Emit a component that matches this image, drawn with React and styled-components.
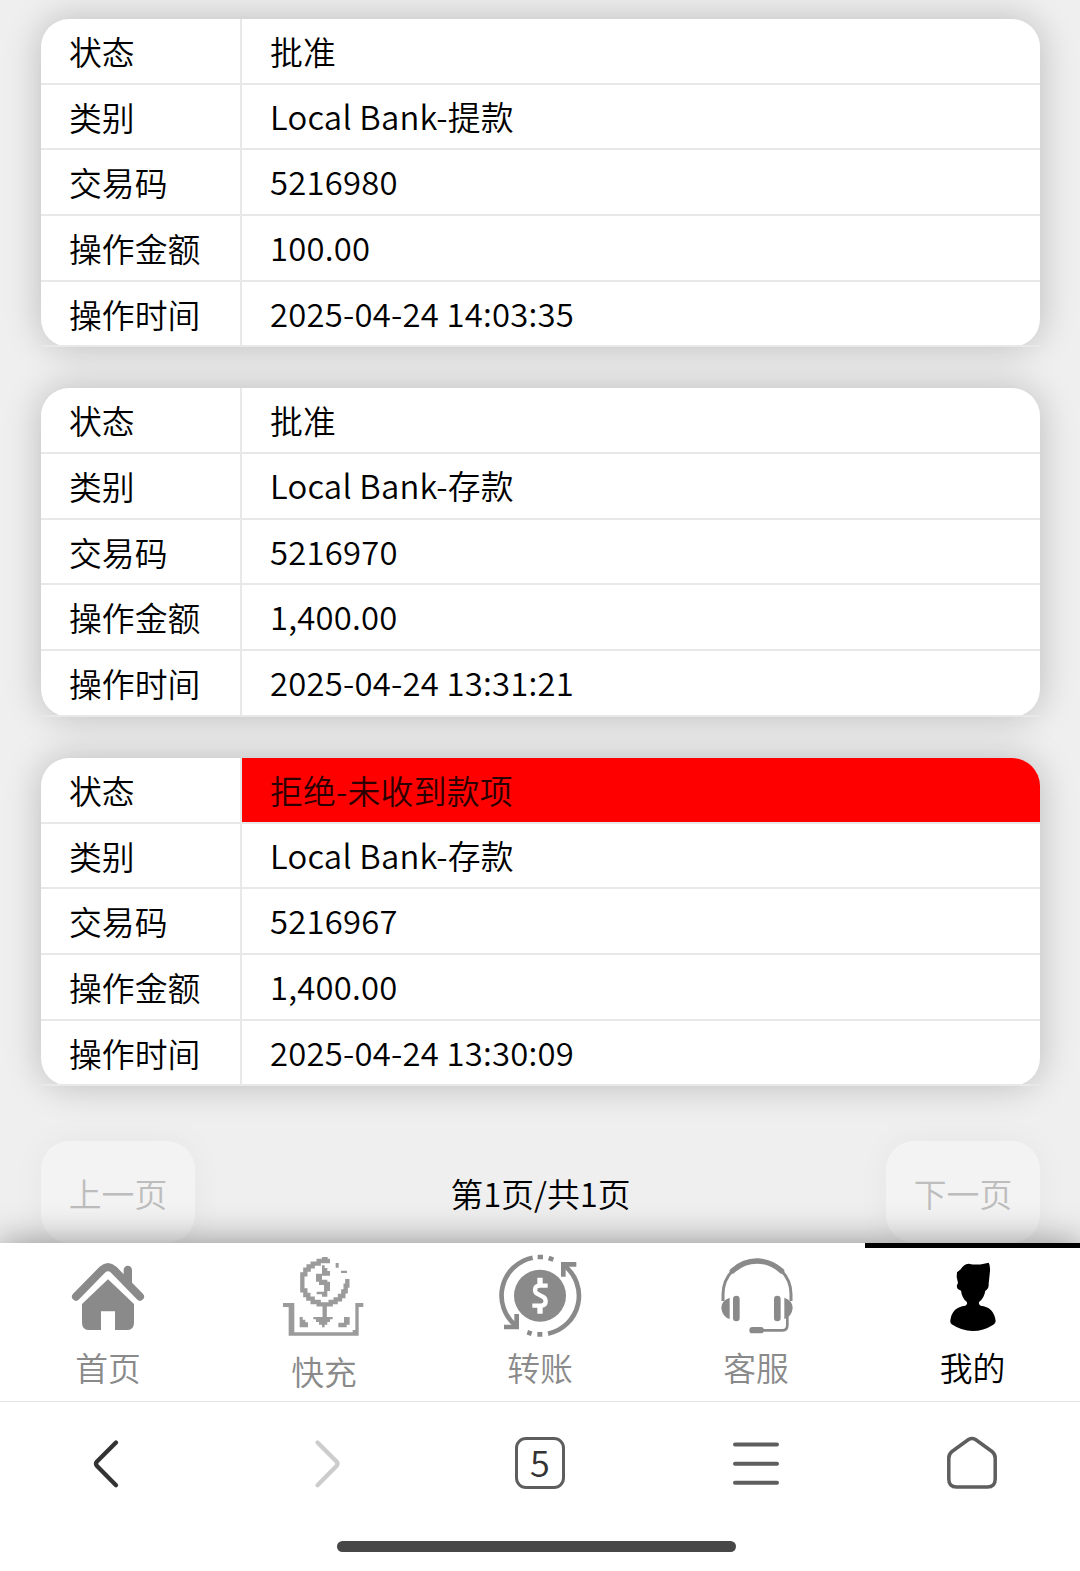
import React from 'react'
import styled, { createGlobalStyle } from 'styled-components'

const GlobalStyle = createGlobalStyle`
  * {
    box-sizing: border-box;
  }
  body {
    margin: 0;
    background: #efefef;
    font-family: "Noto Sans CJK SC", sans-serif;
    font-size: 32.85px;
    font-weight: 350;
    color: #000;
  }
`

const Screen = styled.div`
  display: flex;
  flex-direction: column;
  height: 1571px;
  overflow: hidden;
`

const Content = styled.main`
  flex: 1;
  min-height: 0;
  padding: 19px 40px 0 41px;
`

const Card = styled.section`
  margin-bottom: 41.28px;
  background: #fff;
  border-radius: 28px;
  box-shadow: 0 0 36px rgba(0, 0, 0, 0.22);
`

const Row = styled.div`
  display: flex;
  height: 65.65px;
  border-bottom: 2px solid #e8e8e8;
  line-height: 64px;
  white-space: nowrap;
`

const Label = styled.div`
  width: 201px;
  padding-left: 28px;
  border-right: 2px solid #e8e8e8;
`

const Value = styled.div`
  flex: 1;
  padding-left: 28px;
  letter-spacing: 0.22px;
  line-height: 62.4px;
`

const Status = styled(Value)`
  background: ${(props) => (props.$rejected ? '#ff0000' : 'transparent')};
  color: ${(props) => (props.$rejected ? '#2c0000' : '#000')};
  border-top-right-radius: 28px;
  line-height: 64px;
`

const Pager = styled.div`
  display: flex;
  justify-content: space-between;
  padding-top: 13.5px;
  line-height: 104px;
`

const PageButton = styled.button`
  width: 154px;
  height: 102px;
  padding: 0 0 2px;
  border: 0;
  border-radius: 28px;
  background: #f3f3f3;
  box-shadow: 0 0 34px rgba(0, 0, 0, 0.045);
  color: #bdbdbd;
  font: inherit;
  line-height: 104px;
`

const TabBar = styled.nav`
  display: grid;
  grid-template-columns: repeat(5, 1fr);
  height: 158px;
  background: #fff;
  box-shadow: 0 0 34px rgba(0, 0, 0, 0.42);
  position: relative;
`

const Tab = styled.a`
  display: flex;
  flex-direction: column;
  align-items: center;
  margin-left: ${(props) => (props.$active ? '1px' : '0')};
  border-top: 5px solid ${(props) => (props.$active ? '#000' : 'transparent')};
  color: ${(props) => (props.$active ? '#000' : '#8a8a8a')};
`

const TabIcon = styled.svg`
  width: 82px;
  height: 82px;
  margin-top: ${(props) => props.$top || 6}px;
`

const TabText = styled.span`
  margin-top: ${(props) => props.$top || 7}px;
  line-height: 48px;
`

const BrowserBar = styled.footer`
  display: flex;
  flex-direction: column;
  align-items: center;
  height: 170px;
  background: #fff;
  border-top: 1px solid #e3e3e3;
  position: relative;
`

const Tools = styled.div`
  display: grid;
  grid-template-columns: repeat(5, 1fr);
  place-items: center;
  width: 100%;
  height: 123px;
`

const ToolIcon = styled.svg`
  width: 60px;
  height: 60px;
  fill: none;
  stroke: ${(props) => props.$color || '#5e5e5e'};
  stroke-width: ${(props) => props.$stroke || 4};
  stroke-linecap: round;
  stroke-linejoin: round;
`

const TabCount = styled.div`
  width: 50px;
  height: 52px;
  margin-bottom: 2px;
  border: 3.5px solid #5e5e5e;
  border-radius: 11px;
  color: #333;
  font-size: 36px;
  line-height: 43px;
  text-align: center;
`

const HomeIndicator = styled.div`
  width: 399px;
  height: 11px;
  margin-top: 16px;
  margin-left: -7px;
  border-radius: 6px;
  background: #474747;
`

const records = [
  { status: '批准', type: 'Local Bank-提款', code: '5216980', amount: '100.00', time: '2025-04-24 14:03:35' },
  { status: '批准', type: 'Local Bank-存款', code: '5216970', amount: '1,400.00', time: '2025-04-24 13:31:21' },
  { status: '拒绝-未收到款项', rejected: true, type: 'Local Bank-存款', code: '5216967', amount: '1,400.00', time: '2025-04-24 13:30:09' },
]

function HomeIcon() {
  return (
    <TabIcon viewBox="201 402 246 246">
      <path d="M371 478V450a12.500 12.500 0 0 1 25 0V502z" fill="currentColor" />
      <path d="M228 530L307 449Q324 434 341 449L420 530" fill="none" stroke="currentColor" strokeWidth="24" strokeLinecap="round" />
      <path d="M324 478L402 552V608Q402 630 380 630H345V574H303V630H268Q246 630 246 608V552Z" fill="currentColor" />
    </TabIcon>
  )
}

function DepositIcon() {
  return (
    <TabIcon viewBox="69 60 246 246" $top={7} color="#9b9b9b">
      <g fill="none" stroke="currentColor" strokeWidth="13">
        <path d="M210 78H176V86H158V94H146V104H136V118H127V166H136V180H145V191H158V201H176V208H212V201H227V193H240V183H250V169H257V152H262V132" />
        <path d="M194 208V250" />
      </g>
      <path d="M186 66h17v8h-17zM227 84h9v14h-9zM243 107h18v7h-18z" fill="currentColor" />
      <path d="M186 91H194V99H202V108H210V122H186V134H202V140H210V168H202V185H186V178H170V170H192V150H177V140H168V116H186Z" fill="currentColor" />
      <path d="M160 246H218V253H210V261H202V269H194V277H186V269H177V261H168V253H160Z" fill="currentColor" />
      <path d="M119 246H128V254H136V262H144V277H119ZM252 246H269V269H260V277H235V263H252Z" fill="currentColor" />
      <path d="M69 204H103V292H278V285H286V204H310V216H296V302H86V216H69Z" fill="currentColor" />
    </TabIcon>
  )
}

function TransferIcon() {
  return (
    <TabIcon viewBox="57 58 246 246" overflow="visible">
      <circle cx="180" cy="183" r="78" fill="currentColor" />
      <g fill="none" stroke="currentColor" strokeWidth="14">
        <path d="M158 69A116 116 0 0 0 109 274" />
        <path d="M204 297A116 116 0 0 0 251 91" />
        <path d="M72 277H110V238" />
        <path d="M289 89H250V126" />
        <path d="M173 67H189M206 70L220 75M172 299H187M142 293L155 297" />
      </g>
      <path d="M203 153H179Q165 153 165 166Q165 176 177 180L186 185Q197 190 197 200Q197 213 184 213H157" fill="none" stroke="#fff" strokeWidth="13" />
      <path d="M172 129H188V150H172ZM172 216H188V237H172Z" fill="#fff" />
    </TabIcon>
  )
}

function ServiceIcon() {
  return (
    <TabIcon viewBox="45 57 246 246">
      <g fill="none" stroke="currentColor">
        <path d="M69 198V178A102 102 0 0 1 273 178V198" strokeWidth="9" />
        <path d="M97 108Q130 78 171 78Q212 78 245 108" strokeWidth="16" strokeLinecap="round" />
        <path d="M262 244V270Q262 286 248 286H188" strokeWidth="8" />
      </g>
      <path d="M89 188Q64 196 64 220Q67 246 89 252ZM253 188Q278 196 278 220Q275 246 253 252Z" fill="currentColor" />
      <rect x="99" y="182" width="20" height="77" rx="10" fill="currentColor" />
      <rect x="222" y="182" width="20" height="77" rx="10" fill="currentColor" />
      <rect x="148" y="276" width="44" height="19" rx="9.500" fill="currentColor" />
    </TabIcon>
  )
}

function MineIcon() {
  return (
    <TabIcon viewBox="216 57 246 246">
      <path
        d="M291 112L302 103Q310 88 326 86Q350 91 372 86L386 83Q391 90 390 108L386 146Q387 162 376 167Q372 190 358 200Q354 208 362 212Q402 216 407 258Q407 265 400 269Q370 288 338 288Q305 288 275 268Q270 264 271 256Q276 216 316 212Q324 208 320 200Q306 190 303 167Q288 163 291 150L294 144L290 125Z"
        fill="currentColor"
      />
    </TabIcon>
  )
}

const tabs = [
  { text: '首页', icon: <HomeIcon /> },
  { text: '快充', icon: <DepositIcon />, top: 10 },
  { text: '转账', icon: <TransferIcon /> },
  { text: '客服', icon: <ServiceIcon /> },
  { text: '我的', icon: <MineIcon />, active: true },
]

function RecordCard({ record }) {
  return (
    <Card>
      <Row><Label>状态</Label><Status $rejected={record.rejected}>{record.status}</Status></Row>
      <Row><Label>类别</Label><Value>{record.type}</Value></Row>
      <Row><Label>交易码</Label><Value>{record.code}</Value></Row>
      <Row><Label>操作金额</Label><Value>{record.amount}</Value></Row>
      <Row><Label>操作时间</Label><Value>{record.time}</Value></Row>
    </Card>
  )
}

export default function App() {
  return (
    <Screen>
      <GlobalStyle />
      <Content>
        {records.map((record) => <RecordCard key={record.code} record={record} />)}
        <Pager>
          <PageButton disabled>上一页</PageButton>
          <span>第1页/共1页</span>
          <PageButton disabled>下一页</PageButton>
        </Pager>
      </Content>
      <TabBar>
        {tabs.map((tab) => (
          <Tab key={tab.text} $active={tab.active}>
            {tab.icon}
            <TabText $top={tab.top}>{tab.text}</TabText>
          </Tab>
        ))}
      </TabBar>
      <BrowserBar>
        <Tools>
          <ToolIcon viewBox="78 1434 60 60" $color="#333" $stroke={4.3}>
            <path d="M116 1442.500L97 1461.500Q95 1463.700 97 1466L116 1485.300" />
          </ToolIcon>
          <ToolIcon viewBox="294 1434 60 60" $color="#ccc" $stroke={4.3}>
            <path d="M317.500 1442.500L336.500 1461.500Q338.500 1463.700 336.500 1466L317.500 1485.300" />
          </ToolIcon>
          <TabCount>5</TabCount>
          <ToolIcon viewBox="726 1434 60 60">
            <path d="M735 1444.500H777M735 1463.800H777M735 1482.800H777" />
          </ToolIcon>
          <ToolIcon viewBox="942 1434 60 60" $stroke={3.5}>
            <path d="M968.500 1439.500Q972 1437.500 975.500 1439.500L992 1451.500Q995.200 1454 995.200 1458V1479Q995.200 1487 987.500 1487H956.500Q948.800 1487 948.800 1479V1458Q948.800 1454 952 1451.500Z" />
          </ToolIcon>
        </Tools>
        <HomeIndicator />
      </BrowserBar>
    </Screen>
  )
}
